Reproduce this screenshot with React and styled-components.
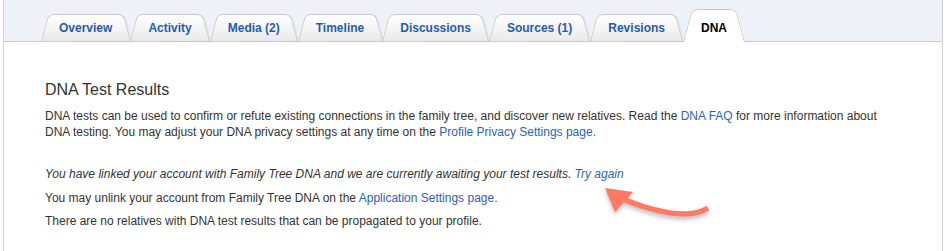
import React from "react";
import styled, { createGlobalStyle } from "styled-components";

const tabs = [
  "Overview",
  "Activity",
  "Media (2)",
  "Timeline",
  "Discussions",
  "Sources (1)",
  "Revisions",
  "DNA",
];

function App() {
  return (
    <>
      <GlobalStyle />
      <Page>
        <TabBar>
          {tabs.map((t) => (
            <Tab key={t} $active={t === "DNA"}>
              {t}
            </Tab>
          ))}
        </TabBar>
        <Panel>
          <Heading>DNA Test Results</Heading>
          <Para>
            DNA tests can be used to confirm or refute existing connections in
            the family tree, and discover new relatives. Read the{" "}
            <Link>DNA FAQ</Link> for more information about DNA testing. You may
            adjust your DNA privacy settings at any time on the{" "}
            <Link>Profile Privacy Settings page.</Link>
          </Para>
          <Para $italic $gap>
            You have linked your account with Family Tree DNA and we are
            currently awaiting your test results. <Link>Try again</Link>
          </Para>
          <Para>
            You may unlink your account from Family Tree DNA on the{" "}
            <Link>Application Settings page.</Link>
          </Para>
          <Para>
            There are no relatives with DNA test results that can be propagated
            to your profile.
          </Para>
        </Panel>
        <Arrow viewBox="0 0 120 45" width="120" height="45">
          <path
            d="M108 29 Q84 44 25 21"
            fill="none"
            stroke="#ff7a65"
            strokeWidth="5.5"
          />
          <polygon points="5,9 33,13 15,33" fill="#ff7a65" />
        </Arrow>
      </Page>
    </>
  );
}

const GlobalStyle = createGlobalStyle`
  body {
    margin: 0;
    background: #fff;
    font-family: "Liberation Sans", Arial, sans-serif;
  }
`;

const Page = styled.div`
  position: relative;
  margin-left: 3px;
  width: 938px;
  min-height: 100vh;
  border-left: 1px solid #d2d2d2;
  border-right: 1px solid #d2d2d2;
  background: #fff;
`;

const TabBar = styled.div`
  display: flex;
  align-items: flex-end;
  height: 41px;
  padding-left: 37px;
  background: #eef2f8;
  border-bottom: 1px solid #c9c9c9;
`;

const Tab = styled.a`
  position: relative;
  z-index: ${(p) => (p.$active ? 2 : 1)};
  display: block;
  box-sizing: border-box;
  height: ${(p) => (p.$active ? "33px" : "27px")};
  margin-bottom: ${(p) => (p.$active ? "-1px" : "0")};
  padding: ${(p) => (p.$active ? "7px 18px 0" : "2px 18px 0")};
  line-height: 25px;
  font-size: 12px;
  font-weight: bold;
  color: ${(p) => (p.$active ? "#000" : "#1c5cb8")};
  white-space: nowrap;
  cursor: pointer;

  &::before,
  &::after {
    content: "";
    position: absolute;
    top: 0;
    bottom: 0;
    width: 60%;
    z-index: -1;
    background: ${(p) =>
      p.$active ? "#fff" : "linear-gradient(#ffffff, #f3f3f3 60%, #e9e9e9)"};
    border: 1px solid #c6c6c6;
    border-bottom: none;
  }

  &::before {
    left: 0;
    border-right: none;
    border-top-left-radius: 6px;
    transform: skewX(-15deg);
    transform-origin: bottom left;
  }

  &::after {
    right: 0;
    border-left: none;
    border-top-right-radius: 6px;
    transform: skewX(15deg);
    transform-origin: bottom right;
    box-shadow: ${(p) => (p.$active ? "none" : "1px 0 1px rgba(0,0,0,0.08)")};
  }
`;

const Panel = styled.div`
  padding: 38px 40px 20px 41px;
  color: #333;
  font-size: 12px;
  line-height: 16px;
`;

const Heading = styled.h2`
  margin: 0 0 8px;
  font-size: 16px;
  font-weight: normal;
  line-height: 20px;
  color: #333;
`;

const Para = styled.p`
  margin: ${(p) => (p.$gap ? "26px" : "0")} 0 7.5px;
  font-style: ${(p) => (p.$italic ? "italic" : "normal")};
`;

const Link = styled.a`
  color: #2a63b9;
  cursor: pointer;
`;

const Arrow = styled.svg`
  position: absolute;
  left: 596px;
  top: 179px;
  pointer-events: none;
  filter: drop-shadow(0 3px 2px rgba(0, 0, 0, 0.25));
`;

export default App;
